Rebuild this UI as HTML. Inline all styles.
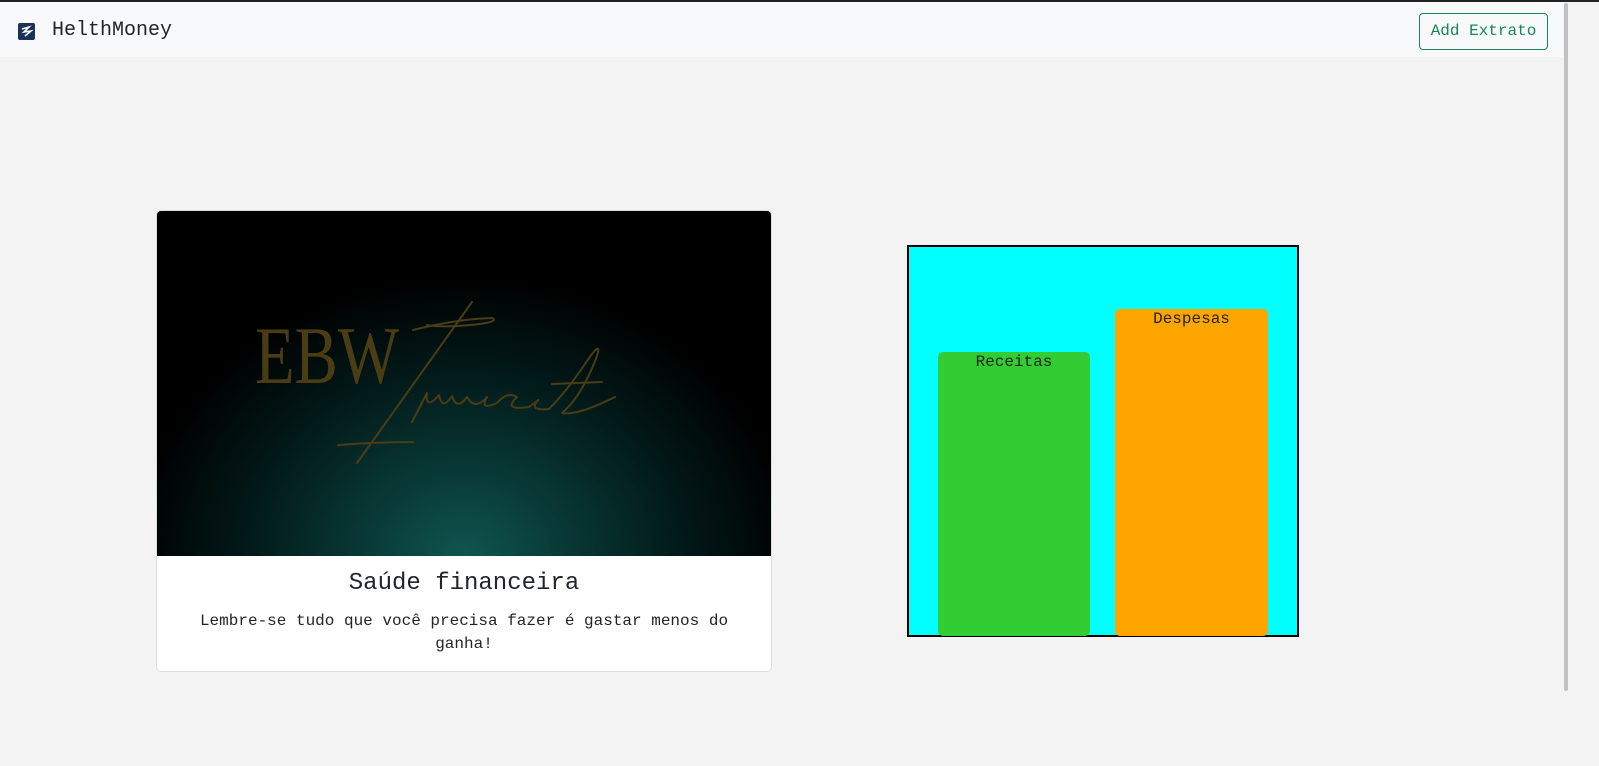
<!DOCTYPE html>
<html><head><meta charset="utf-8"><style>
*{margin:0;padding:0;box-sizing:border-box}
body{width:1599px;height:766px;background:#f3f3f3;font-family:"Liberation Mono",monospace;position:relative;overflow:hidden;color:#212529}
.top{position:absolute;left:0;top:0;width:1599px;height:2px;background:#222}
.nav{position:absolute;left:0;top:2px;width:1563px;height:55px;background:#f8f9fa}
.brand{position:absolute;left:52px;top:17px;font-size:20px;color:#212529}
.logo{position:absolute;left:18px;top:21px}
.btn{position:absolute;left:1419px;top:11px;width:129px;height:37px;border:1px solid #198754;border-radius:4px;color:#198754;font-size:16px;text-align:center;line-height:35px}
.sb{position:absolute;left:1564px;top:3px;width:4px;height:688px;background:#c1c1c1;border-radius:2px}
.card{position:absolute;left:156px;top:210px;width:616px;height:462px;background:#fff;border:1px solid #dcdcdc;border-radius:5px;overflow:hidden}
.img{position:absolute;left:0;top:0;width:614px;height:345px;background:radial-gradient(ellipse 330px 280px at 50% 100%,#0f5550 0%,#073532 35%,#021a1a 65%,#000 100%)}
.t{position:absolute;left:0;width:614px;text-align:center}
.chart{position:absolute;left:907px;top:245px;width:392px;height:392px;background:#00ffff;border:2px solid #000}
.bar{position:absolute;border-radius:5px;text-align:center;font-size:16px;color:#222;padding-top:1px}
</style></head><body>
<div class="top"></div>
<div class="nav"><svg class="logo" width="17" height="17" viewBox="0 0 17 17"><rect width="17" height="17" rx="2" fill="#1c3358"/><path d="M4 6 L11 4 L6 9 L13 8 L7 13" fill="none" stroke="#fff" stroke-width="1.6"/></svg><div class="brand">HelthMoney</div><div class="btn">Add Extrato</div></div>
<div class="sb"></div>
<div class="card">
<div class="img"><svg width="614" height="345" viewBox="0 0 614 345">
<text x="98" y="172" font-family="Liberation Serif,serif" font-size="82" textLength="144" lengthAdjust="spacingAndGlyphs" fill="#4a3d14">EBW</text>
<g fill="none" stroke="#4a3d14" stroke-width="2" stroke-linecap="round" stroke-linejoin="round">
<path d="M315 91 L200 252"/>
<path d="M256 119 Q300 108 335 107 Q345 112 300 115 Q280 116 270 114"/>
<path d="M181 234 Q220 231 256 231"/>
<path d="M255 211 L270 182 Q268 200 282 184 Q285 200 295 185 Q300 200 310 186 Q318 200 330 186 Q322 200 340 192 Q350 180 360 186 Q345 200 372 196 Q385 186 380 190 Q372 200 392 198 Q410 180 430 150 Q445 128 440 145 Q425 185 405 202 Q420 205 458 186"/>
<path d="M395 173 L445 171"/>
</g></svg></div>
<div class="t" style="top:359px;font-size:24px">Saúde financeira</div>
<div class="t" style="top:399px;font-size:16px;line-height:23px;padding:0 40px">Lembre-se tudo que você precisa fazer é gastar menos do ganha!</div>
</div>
<div class="chart">
<div class="bar" style="left:29px;top:105px;width:152px;height:284px;background:#32cd32">Receitas</div>
<div class="bar" style="left:206px;top:62px;width:153px;height:327px;background:#ffa500">Despesas</div>
</div>
</body></html>
